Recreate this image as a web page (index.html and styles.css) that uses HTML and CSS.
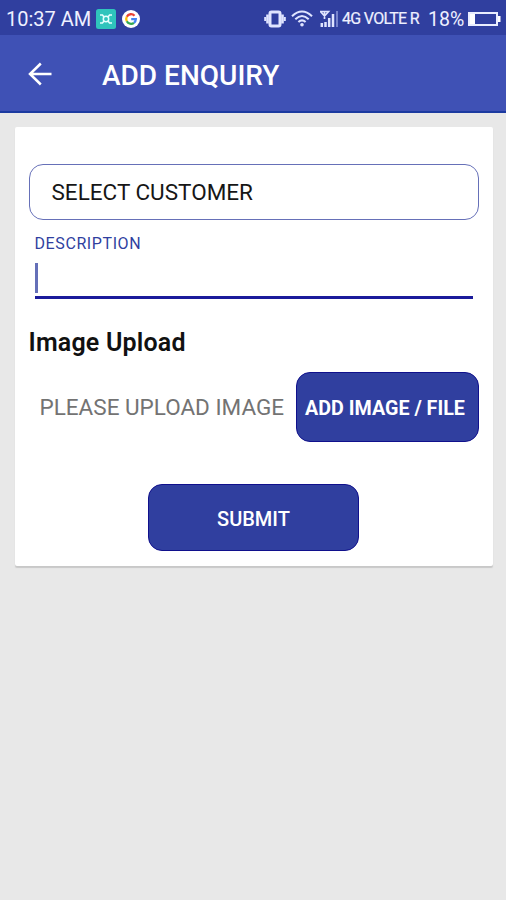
FILE: index.html
```html
<!DOCTYPE html>
<html lang="en">
<head>
<meta charset="utf-8">
<title>Add Enquiry</title>
<link rel="stylesheet" href="styles.css">
</head>
<body>
<div class="status">
  <span class="clock">10:37 AM</span>
  <svg class="app-icon" width="20" height="20" viewBox="0 0 20 20">
    <rect width="20" height="20" rx="2.5" fill="#2fc4bc"/>
    <g fill="none" stroke="#e4ffff" stroke-width="1.5"><circle cx="10" cy="10" r="2.7"/><path d="M4 6h2.500L8 8M16 6h-2.500L12 8M4 14h2.500L8 12M16 14h-2.500L12 12"/></g>
  </svg>
  <svg class="google" width="18" height="18" viewBox="0 0 18 18">
    <circle cx="9" cy="9" r="9" fill="#fff"/>
    <g fill="none" stroke-width="2.300"><path d="M12.500 5.700A4.800 4.800 0 0 0 4.800 6.700" stroke="#e94335"/><path d="M4.800 6.700a4.800 4.800 0 0 0 0 4.600" stroke="#fbbc05"/><path d="M4.800 11.300a4.800 4.800 0 0 0 7.200 1.500" stroke="#34a853"/><path d="M12 12.800A4.800 4.800 0 0 0 13.800 9.200H9.200" stroke="#4285f4"/></g>
  </svg>
  <svg class="vibrate" width="22" height="18" viewBox="0 0 22 18">
    <rect x="6" y="2" width="10" height="14" rx="1.500" fill="none" stroke="#dfe4ff" stroke-width="3"/>
    <path d="M3.500 4.500v9M18.500 4.500v9" stroke="#dfe4ff" stroke-width="2.600"/><path d="M1.200 7v4M20.800 7v4" stroke="#dfe4ff" stroke-width="2"/>
  </svg>
  <svg class="wifi" width="22" height="17" viewBox="0 0 22 17">
    <g fill="none" stroke="#dfe4ff" stroke-width="2.100"><path d="M1 6.200Q11-3.200 21 6.200"/><path d="M4.300 9.200Q11 2.800 17.700 9.200"/><path d="M7.400 12Q11 8.600 14.600 12"/></g><circle cx="11" cy="14.800" r="1.800" fill="#dfe4ff"/>
  </svg>
  <svg class="signal" width="18" height="18" viewBox="0 0 18 18">
    <g fill="none" stroke="#dfe4ff"><path d="M.5 1.500h8L4.500 6zM4.500 2v7" stroke-width="1.700"/><path d="M1.800 17v-4M5.500 17v-5M9.200 17V8M13 17V4" stroke-width="2.500"/><path d="M17 17V1" stroke="#8490d4" stroke-width="1.700"/></g>
  </svg>
  <span class="network">4G VOLTE R</span>
  <span class="percent">18%</span>
  <svg class="battery" width="33" height="14" viewBox="0 0 33 14">
    <rect x="1" y="1" width="28" height="12" fill="none" stroke="#e9edff" stroke-width="2"/><path d="M2 2h5v10H2zM30 4h2.500v6H30z" fill="#fff"/>
  </svg>
</div>
<header class="bar">
  <svg class="back" width="24" height="24" viewBox="0 0 24 24"><path d="M23.500 12H2M12.800 1.500L2 12l10.800 10.500" fill="none" stroke="#fff" stroke-width="2.500"/></svg>
  <h1 class="title">ADD ENQUIRY</h1>
</header>
<main class="card">
  <div class="select"><span>SELECT CUSTOMER</span></div>
  <label class="label">DESCRIPTION</label>
  <div class="field"><i class="caret"></i></div>
  <h2 class="heading">Image Upload</h2>
  <div class="upload">
    <span class="hint">PLEASE UPLOAD IMAGE</span>
    <button class="btn add">ADD IMAGE / FILE</button>
  </div>
  <button class="btn submit">SUBMIT</button>
</main>
</body>
</html>
```
FILE: styles.css
```css
* { box-sizing: border-box; }
body { margin: 0; min-height: 900px; background: #e8e8e8; font-family: Roboto, "Liberation Sans", sans-serif; white-space: nowrap; overflow: hidden; }
.status { display: flex; align-items: center; height: 35px; padding: 2px 0 0 6px; background: #303f9f; color: #eef0ff; }
.status svg { flex: none; }
.clock { width: 85px; margin-right: 5px; font-size: 20px; }
.google { margin-left: 6px; }
.vibrate { margin-left: 124px; }
.wifi { margin-left: 5px; }
.signal { margin-left: 7px; }
.network { width: 79px; margin-left: 4px; font-size: 16px; letter-spacing: -0.7px; -webkit-text-stroke: 0.2px; }
.percent { width: 37px; margin-left: 7px; padding-top: 1px; font-size: 19.500px; }
.battery { margin-left: 3px; }
.bar { display: flex; align-items: center; height: 78px; padding: 0 0 0 28px; background: #3f51b5; border-bottom: 2px solid #1c3aa0; color: #fff; }
.back { margin-top: 1px; }
.title { margin: 6px 0 0 50px; font-size: 28px; font-weight: 500; line-height: 32px; }
.card { width: 478px; height: 439px; margin: 14px 0 0 14.500px; padding: 37px 14px 0; background: #fff; border-radius: 2px; box-shadow: 0 2px 1px #c8c8c8; }
.select { display: flex; align-items: center; height: 56px; padding-left: 22px; border: 1.500px solid #6670b8; border-radius: 14px; color: #161616; font-size: 22.500px; }
.label { display: block; margin: 14px 0 0 6px; color: #303f9f; font-size: 16px; line-height: 20px; letter-spacing: 0.600px; }
.field { width: 438px; height: 36px; margin: 9px 0 0 6px; border-bottom: 3px solid #1b1b9b; }
.caret { display: block; width: 3px; height: 30px; background: #6570b8; }
.heading { margin: 29px 0 0; color: #111; font-size: 25px; font-weight: 600; line-height: 30px; letter-spacing: 0.2px; }
.upload { display: flex; align-items: center; justify-content: space-between; margin-top: 14px; padding-left: 11px; }
.hint { color: #737373; font-size: 22.500px; font-weight: 400; }
.btn { display: block; padding: 0; border: 1px solid #10108c; border-radius: 14px; background: #303f9f; color: #fff; font-family: inherit; font-size: 20px; }
.add { width: 183px; height: 70px; padding: 2px 4px 0 0; font-size: 19.700px; font-weight: 700; }
.submit { width: 211px; height: 67px; margin: 42px 0 0 119px; padding: 2px 0 0 1px; font-weight: 500; }
```
